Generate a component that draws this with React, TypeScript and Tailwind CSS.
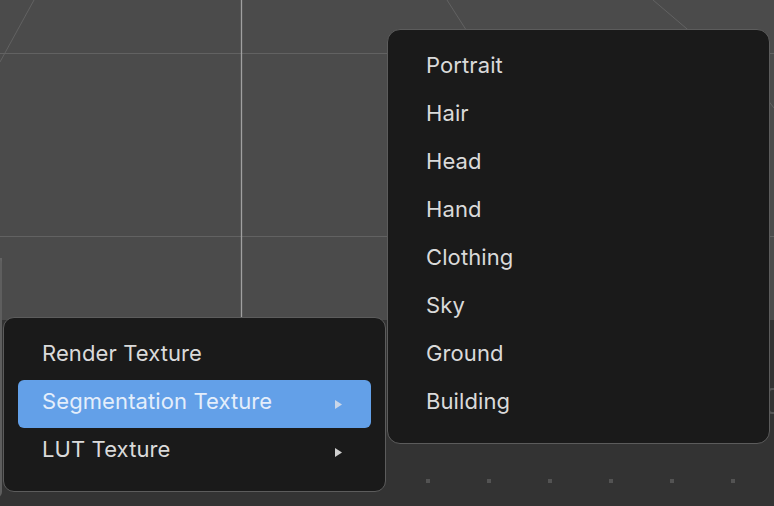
import React from "react";

const subItems = ["Portrait", "Hair", "Head", "Hand", "Clothing", "Sky", "Ground", "Building"];

function Arrow() {
  return (
    <svg width="7" height="9" viewBox="0 0 7 9" className="shrink-0">
      <path d="M0 0 L7 4.5 L0 9 Z" fill="currentColor" />
    </svg>
  );
}

export default function App() {
  return (
    <div
      className="relative w-[774px] h-[506px] overflow-hidden bg-[#333333] flex flex-col"
      style={{ fontFamily: "Inter, 'Noto Sans', sans-serif" }}
    >
      {/* viewport canvas */}
      <div className="relative h-[320px] bg-[#4b4b4b] shrink-0">
        <svg width="774" height="320" className="absolute inset-0">
          <line x1="0" y1="53.5" x2="774" y2="53.5" stroke="#626262" strokeWidth="1" />
          <line x1="0" y1="236.5" x2="774" y2="236.5" stroke="#626262" strokeWidth="1" />
          <line x1="34" y1="0" x2="0" y2="62" stroke="#626262" strokeWidth="1" />
          <line x1="447" y1="0" x2="470" y2="36" stroke="#626262" strokeWidth="1" />
          <line x1="653" y1="0" x2="700" y2="40" stroke="#626262" strokeWidth="1" />
          <line x1="760" y1="90" x2="774" y2="108" stroke="#626262" strokeWidth="1" />
          <line x1="241.5" y1="0" x2="241.5" y2="320" stroke="#a0a0a0" strokeWidth="1.3" />
          <line x1="1" y1="258" x2="1" y2="320" stroke="#636363" strokeWidth="2" />
        </svg>
      </div>
      {/* bottom panel */}
      <div className="relative flex-1 bg-[#333333]">
        <div className="absolute left-[-10px] top-[-62px] w-[12px] h-[240px] rounded-[8px] border-2 border-[#5e5e5e]" />
        <div className="absolute left-[768px] top-[68px] w-[20px] h-[26px] rounded-[4px] border-2 border-[#555555]" />
        <div className="absolute left-[426px] top-[159px] flex gap-[57px]">
          {[0, 1, 2, 3, 4, 5].map((i) => (
            <div key={i} className="w-[4px] h-[4px] bg-[#535353]" />
          ))}
        </div>
      </div>

      {/* main menu */}
      <div className="absolute left-[3px] top-[317px] w-[383px] h-[175px] rounded-[11px] border border-[#5c5c5c] bg-[#1a1a1a] px-[14px] pt-[14px] pb-[14px] flex flex-col tracking-[0.1px]">
        <div className="h-[48px] flex items-center pl-[24px] pr-[29px] pb-[6px] text-[22px] text-[#dadada]">
          Render Texture
        </div>
        <div className="h-[48px] flex items-center justify-between pl-[24px] pr-[29px] rounded-[6px] bg-[#63a0e8] text-[22px] text-[#e4eefb]">
          <span className="pb-[6px]">Segmentation Texture</span>
          <span className="text-[#c9d6e8]"><Arrow /></span>
        </div>
        <div className="h-[48px] flex items-center justify-between pl-[24px] pr-[29px] text-[22px] text-[#dadada]">
          <span className="pb-[6px]">LUT Texture</span>
          <span className="text-[#cfcfcf]"><Arrow /></span>
        </div>
      </div>

      {/* submenu */}
      <div className="absolute left-[387px] top-[29px] w-[383px] h-[415px] rounded-[13px] border border-[#5c5c5c] bg-[#1a1a1a] px-[14px] py-[14px] flex flex-col tracking-[0.1px]">
        {subItems.map((s) => (
          <div key={s} className="h-[48px] flex items-center pl-[24px] pb-[6px] text-[22px] text-[#dadada]">
            {s}
          </div>
        ))}
      </div>
    </div>
  );
}
